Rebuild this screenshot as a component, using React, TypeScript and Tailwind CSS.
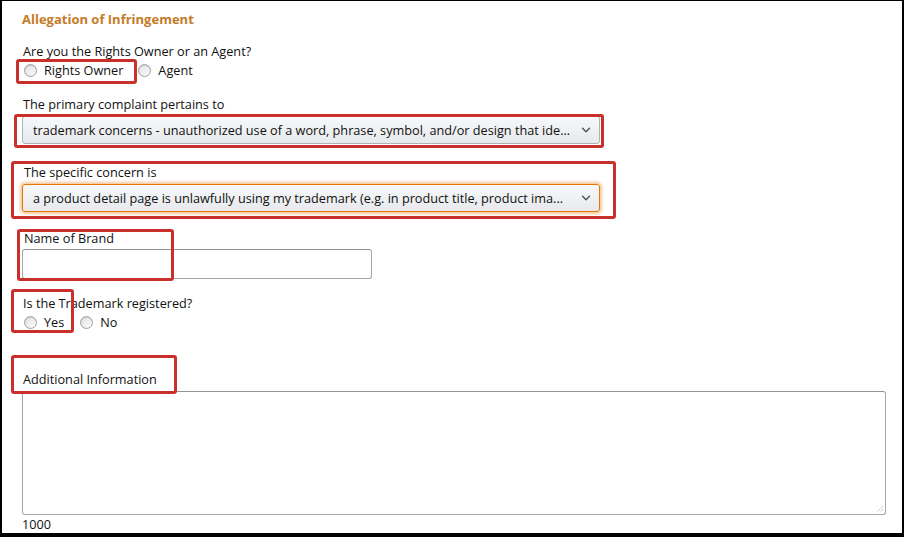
import { ChevronDown } from "lucide-react";

const font = { fontFamily: '"Open Sans", "Liberation Sans", Arial, sans-serif' };

function Radio({ label }: { label: string }) {
  return (
    <label className="flex items-center gap-[7px]">
      <span className="ml-[2px] h-[13px] w-[13px] rounded-full border border-[#a0a0a0] bg-gradient-to-br from-[#e2e2e2] to-[#fbfbfb] shadow-[inset_0_1px_1px_rgba(0,0,0,0.12)]" />
      <span>{label}</span>
    </label>
  );
}

function Select({ text, focused }: { text: string; focused?: boolean }) {
  return (
    <div
      className={`flex h-[28px] w-[578px] items-center justify-between rounded-[3px] border bg-gradient-to-b from-[#f7f8fa] to-[#e7e9ec] pl-[10px] pr-[6px] ${
        focused
          ? "border-[#e77600] shadow-[0_0_3px_2px_rgba(228,121,17,0.4)]"
          : "border-[#adb1b8] shadow-[0_1px_0_rgba(255,255,255,0.6)_inset]"
      }`}
    >
      <span className="whitespace-nowrap">{text}</span>
      <ChevronDown size={14} strokeWidth={2.5} className="shrink-0 text-[#555]" />
    </div>
  );
}

const boxes = [
  "left-[14px] top-[58px] w-[121px] h-[25px]",
  "left-[12px] top-[113px] w-[590px] h-[34px]",
  "left-[9px] top-[160px] w-[605px] h-[58px]",
  "left-[15px] top-[228px] w-[157px] h-[52px]",
  "left-[9px] top-[288px] w-[63px] h-[44px]",
  "left-[9px] top-[354px] w-[166px] h-[39px]",
];

export default function App() {
  return (
    <div
      className="relative h-[537px] w-[904px] overflow-hidden border-b-[4px] border-l-[2px] border-r-[2px] border-t border-black bg-white text-[12.7px] leading-[18px] text-[#111]"
      style={font}
    >
      <div className="flex flex-col items-start pl-[20px] pt-[9px]">
        <h2 className="text-[13px] font-bold text-[#c47b27]">Allegation of Infringement</h2>

        <p className="mt-[14px] pl-[1px]">Are you the Rights Owner or an Agent?</p>
        <div className="mt-[1px] flex items-center gap-[13px]">
          <Radio label="Rights Owner" />
          <Radio label="Agent" />
        </div>

        <p className="mt-[16px] pl-[1px]">The primary complaint pertains to</p>
        <div className="mt-[3px]">
          <Select text="trademark concerns - unauthorized use of a word, phrase, symbol, and/or design that ide..." />
        </div>

        <p className="mt-[19px] pl-[2px]">The specific concern is</p>
        <div className="mt-[3px]">
          <Select
            focused
            text="a product detail page is unlawfully using my trademark (e.g. in product title, product ima..."
          />
        </div>

        <p className="mt-[17px] pl-[2px]">Name of Brand</p>
        <div className="mt-[2px] h-[30px] w-[350px] rounded-[3px] border border-[#a6a6a6] border-t-[#949494] shadow-[inset_0_1px_0_rgba(255,255,255,0.5),0_1px_0_rgba(255,255,255,0.1)]" />

        <p className="mt-[15px] pl-[1px]">Is the Trademark registered?</p>
        <div className="mt-[1px] flex items-center gap-[14px]">
          <Radio label="Yes" />
          <Radio label="No" />
        </div>

        <p className="mt-[39px] pl-[1px]">Additional Information</p>
        <div className="relative mt-[3px] h-[124px] w-[864px] rounded-[3px] border border-[#a6a6a6] border-t-[#949494]">
          <svg className="absolute bottom-[1px] right-[1px]" width="9" height="9" viewBox="0 0 9 9">
            <path d="M8 2 L2 8 M8 5 L5 8" stroke="#aaa" strokeWidth="1" strokeDasharray="1 1" />
          </svg>
        </div>
        <p>1000</p>
      </div>

      {boxes.map((b, i) => (
        <div
          key={i}
          className={`pointer-events-none absolute rounded-[3px] border-[3px] border-[#c9302c] ${b}`}
        />
      ))}
    </div>
  );
}
